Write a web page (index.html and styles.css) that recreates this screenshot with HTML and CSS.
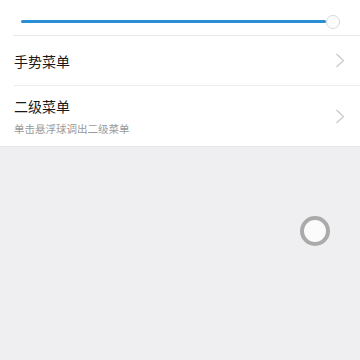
FILE: index.html
```html
<!DOCTYPE html>
<html lang="zh-CN">
<head>
    <meta charset="UTF-8">
    <meta name="viewport" content="width=device-width, initial-scale=1.0">
    <title>悬浮球</title>
    <link rel="stylesheet" href="styles.css">
</head>
<body>
    <div class="panel">
        <div class="slider-row">
            <div class="slider-track"></div>
            <div class="slider-thumb"></div>
        </div>
        <div class="item item-single">
            <div class="item-text">
                <div class="item-title">手势菜单</div>
            </div>
            <svg class="chevron" width="10" height="15" viewBox="0 0 10 15">
                <polyline points="1.5,1 8.5,7.5 1.5,14" fill="none" stroke="#c8c8c8" stroke-width="1.2"/>
            </svg>
        </div>
        <div class="item item-double">
            <div class="item-text">
                <div class="item-title">二级菜单</div>
                <div class="item-sub">单击悬浮球调出二级菜单</div>
            </div>
            <svg class="chevron" width="10" height="15" viewBox="0 0 10 15">
                <polyline points="1.5,1 8.5,7.5 1.5,14" fill="none" stroke="#c8c8c8" stroke-width="1.2"/>
            </svg>
        </div>
    </div>
    <div class="canvas">
        <div class="float-ball"></div>
    </div>
</body>
</html>
```

FILE: styles.css
```css
*{
    padding: 0;
    margin: 0;
    box-sizing: border-box;
}
body{
    background-color: #efeff1;
    font-family: "Noto Sans CJK SC", "Noto Sans", sans-serif;
    width: 360px;
    height: 360px;
    overflow: hidden;
}
.panel{
    background-color: #ffffff;
    border-bottom: 1px solid #e6e6e8;
}
.slider-row{
    height: 36px;
    display: flex;
    align-items: center;
    margin-left: 13px;
    padding: 8px 20px 0 8px;
    border-bottom: 1px solid #e8e8e8;
}
.slider-track{
    flex: 1;
    height: 3px;
    border-radius: 2px;
    background-color: #2b8dd3;
}
.slider-thumb{
    width: 14px;
    height: 14px;
    border-radius: 50%;
    background-color: #fdfdfd;
    border: 1px solid #d8d8d8;
}
.item{
    display: flex;
    align-items: center;
    margin-left: 14px;
    padding-right: 15px;
}
.item-single{
    height: 50px;
    border-bottom: 1px solid #ececec;
}
.item-double{
    height: 60px;
}
.item-text{
    flex: 1;
}
.item-title{
    font-size: 14px;
    line-height: 20px;
    color: #1a1a1a;
}
.item-sub{
    font-size: 10.5px;
    line-height: 16px;
    margin-top: 5px;
    color: #9a9a9a;
}
.chevron{
    display: block;
}
.canvas{
    position: relative;
    height: 214px;
}
.float-ball{
    position: absolute;
    left: 300px;
    top: 69px;
    width: 30px;
    height: 30px;
    border-radius: 50%;
    border: 4px solid #aaaaaa;
    background-color: #fbfbfb;
}
```
